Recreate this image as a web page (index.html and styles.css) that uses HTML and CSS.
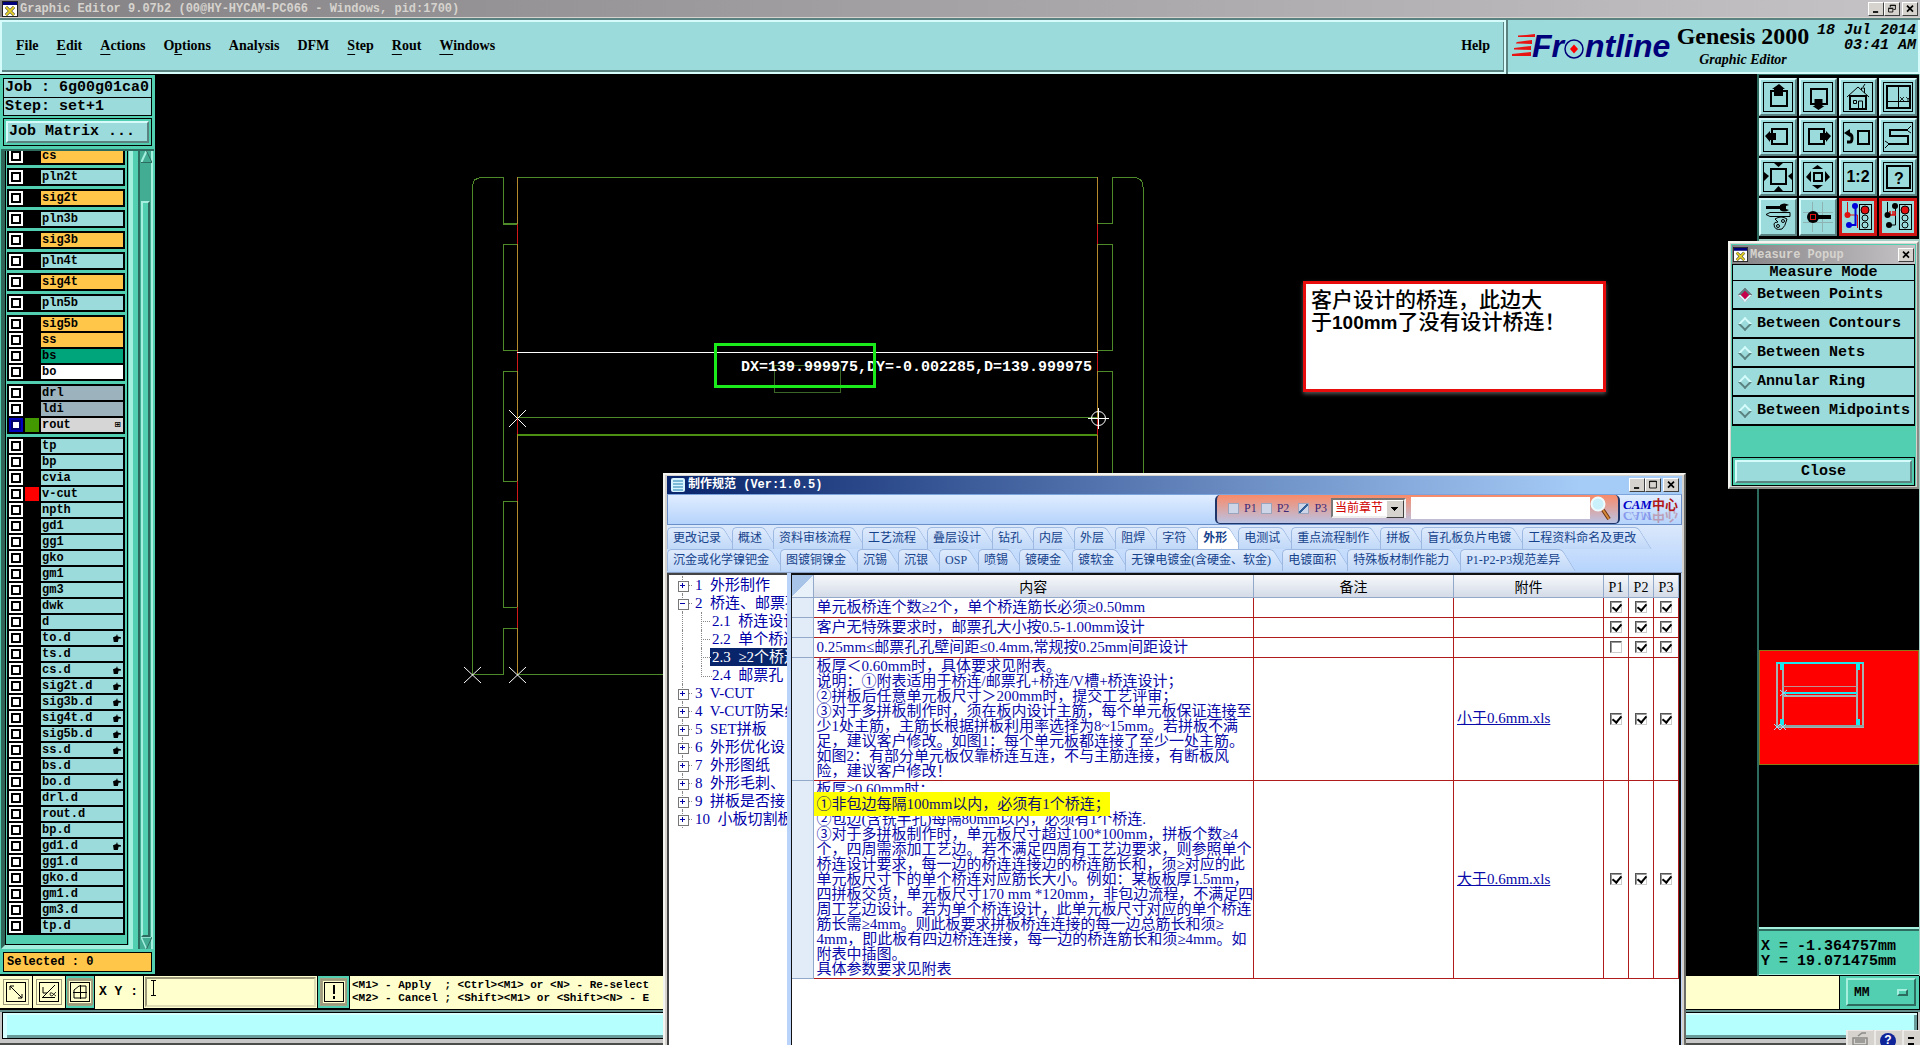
FILE: index.html
```html
<!DOCTYPE html>
<html lang="zh-CN">
<head>
<meta charset="utf-8">
<title>Graphic Editor 9.07b2</title>
<link rel="stylesheet" href="styles.css">
</head>
<body>
<header class="titlebar">
  <svg class="xicon" viewBox="0 0 16 16" width="16" height="16"><rect width="16" height="16" fill="#fff" stroke="#222" stroke-width="2"/><rect x="1" y="1" width="14" height="3" fill="#00007b"/><path d="M4 6l8 8M12 6l-8 8" stroke="#222" stroke-width="3"/><path d="M4 6l8 8M12 6l-8 8" stroke="#e6d22a" stroke-width="2"/></svg>
  <h1>Graphic Editor 9.07b2 (00@HY-HYCAM-PC066 - Windows, pid:1700)</h1>
  <div class="winbtns">
    <button aria-label="Minimize"><svg viewBox="0 0 15 14"><path d="M4 10.500h6" stroke="#000" stroke-width="2"/></svg></button>
    <button aria-label="Restore"><svg viewBox="0 0 15 14" fill="none" stroke="#000"><path d="M5.500 5V2.500h6v5H9M5 3h7M3.500 6.500h5v4h-5zM3 6h6"/></svg></button>
    <button class="close" aria-label="Close"><svg viewBox="0 0 15 14"><path d="M4 3l7 7M11 3l-7 7" stroke="#000" stroke-width="2"/></svg></button>
  </div>
</header>

<div class="topbar">
  <nav class="menu">
    <a href="#"><u>F</u>ile</a><a href="#"><u>E</u>dit</a><a href="#"><u>A</u>ctions</a><a href="#">O<u>p</u>tions</a><a href="#">Analysis</a><a href="#">DFM</a><a href="#"><u>S</u>tep</a><a href="#"><u>R</u>out</a><a href="#"><u>W</u>indows</a>
    <a href="#" class="help">Help</a>
  </nav>
  <div class="brand">
    <svg class="logo" width="162" height="34" viewBox="0 0 162 34">
      <g fill="#e81414"><path d="M6 6l17-2v3H6zM5 12l15-2v4l-15-1zM2 18l17-2v4L2 19zM0 24l19-2v4H0z"/><path d="M0 25h19M6 6h17M4 13h16M2 19h17" stroke="#e81414"/></g>
      <text x="20" y="27" class="logotext">Fr</text>
      <text x="73" y="27" class="logotext">ntline</text>
      <circle cx="62" cy="19" r="9" fill="none" stroke="#00007b" stroke-width="1.500"/>
      <path d="M62 14.500l4 4.500-4 4.500-4-4.500z" fill="#f00"/>
    </svg>
    <div class="product"><strong>Genesis 2000</strong><em>Graphic Editor</em></div>
    <time>18 Jul 2014<br>03:41 AM</time>
  </div>
</div>

<main class="work">
  <aside class="layers">
    <div class="job">Job : 6g00g01ca0</div>
    <div class="job second">Step: set+1</div>
    <div class="matrix"><button>Job Matrix ...</button></div>
    <div class="listarea">
      <div class="listbox">
        <div class="scroller">
        <ul><li class="sig"><label><input type="checkbox"><i></i><span>cs</span></label></li></ul>
        <ul><li><label><input type="checkbox"><i></i><span>pln2t</span></label></li></ul>
        <ul><li class="sig"><label><input type="checkbox"><i></i><span>sig2t</span></label></li></ul>
        <ul><li><label><input type="checkbox"><i></i><span>pln3b</span></label></li></ul>
        <ul><li class="sig"><label><input type="checkbox"><i></i><span>sig3b</span></label></li></ul>
        <ul><li><label><input type="checkbox"><i></i><span>pln4t</span></label></li></ul>
        <ul><li class="sig"><label><input type="checkbox"><i></i><span>sig4t</span></label></li></ul>
        <ul><li><label><input type="checkbox"><i></i><span>pln5b</span></label></li></ul>
        <ul>
          <li class="sig"><label><input type="checkbox"><i></i><span>sig5b</span></label></li>
          <li class="sig"><label><input type="checkbox"><i></i><span>ss</span></label></li>
          <li class="mask"><label><input type="checkbox"><i></i><span>bs</span></label></li>
          <li class="silk"><label><input type="checkbox"><i></i><span>bo</span></label></li>
        </ul>
        <ul>
          <li class="drill"><label><input type="checkbox"><i></i><span>drl</span></label></li>
          <li class="drill"><label><input type="checkbox"><i></i><span>ldi</span></label></li>
          <li class="rout"><label><input type="checkbox"><i></i><span>rout<b>⊞</b></span></label></li>
        </ul>
        <ul>
          <li><label><input type="checkbox"><i></i><span>tp</span></label></li>
          <li><label><input type="checkbox"><i></i><span>bp</span></label></li>
          <li><label><input type="checkbox"><i></i><span>cvia</span></label></li>
          <li class="vcut"><label><input type="checkbox"><i></i><span>v-cut</span></label></li>
          <li><label><input type="checkbox"><i></i><span>npth</span></label></li>
          <li><label><input type="checkbox"><i></i><span>gd1</span></label></li>
          <li><label><input type="checkbox"><i></i><span>gg1</span></label></li>
          <li><label><input type="checkbox"><i></i><span>gko</span></label></li>
          <li><label><input type="checkbox"><i></i><span>gm1</span></label></li>
          <li><label><input type="checkbox"><i></i><span>gm3</span></label></li>
          <li><label><input type="checkbox"><i></i><span>dwk</span></label></li>
          <li><label><input type="checkbox"><i></i><span>d</span></label></li>
          <li class="hand"><label><input type="checkbox"><i></i><span>to.d</span></label></li>
          <li><label><input type="checkbox"><i></i><span>ts.d</span></label></li>
          <li class="hand"><label><input type="checkbox"><i></i><span>cs.d</span></label></li>
          <li class="hand"><label><input type="checkbox"><i></i><span>sig2t.d</span></label></li>
          <li class="hand"><label><input type="checkbox"><i></i><span>sig3b.d</span></label></li>
          <li class="hand"><label><input type="checkbox"><i></i><span>sig4t.d</span></label></li>
          <li class="hand"><label><input type="checkbox"><i></i><span>sig5b.d</span></label></li>
          <li class="hand"><label><input type="checkbox"><i></i><span>ss.d</span></label></li>
          <li><label><input type="checkbox"><i></i><span>bs.d</span></label></li>
          <li class="hand"><label><input type="checkbox"><i></i><span>bo.d</span></label></li>
          <li><label><input type="checkbox"><i></i><span>drl.d</span></label></li>
          <li><label><input type="checkbox"><i></i><span>rout.d</span></label></li>
          <li><label><input type="checkbox"><i></i><span>bp.d</span></label></li>
          <li class="hand"><label><input type="checkbox"><i></i><span>gd1.d</span></label></li>
          <li><label><input type="checkbox"><i></i><span>gg1.d</span></label></li>
          <li><label><input type="checkbox"><i></i><span>gko.d</span></label></li>
          <li><label><input type="checkbox"><i></i><span>gm1.d</span></label></li>
          <li><label><input type="checkbox"><i></i><span>gm3.d</span></label></li>
          <li><label><input type="checkbox"><i></i><span>tp.d</span></label></li>
        </ul>
        </div>
      </div>
      <div class="scrollbar">
        <svg width="11" height="12" viewBox="0 0 11 12"><path d="M5.500 0L0 12h11z" fill="#43ad94"/><path d="M5.500 0L0 12" stroke="#a5efde" stroke-width="2"/><path d="M5.500 0L11 11.500H0" fill="none" stroke="#2d6b5e" stroke-width="1"/></svg>
        <div class="trough"></div>
        <div class="thumb"></div>
        <svg width="11" height="12" viewBox="0 0 11 12"><path d="M5.500 12L0 0h11z" fill="#43ad94"/><path d="M5.500 12L0 0h11" fill="none" stroke="#a5efde" stroke-width="1.500"/><path d="M5.500 12L11 0" stroke="#2d6b5e"/></svg>
      </div>
    </div>
    <div class="selected">Selected : 0</div>
  </aside>

  <section class="canvas">
    <svg class="drawing" width="100%" height="100%">
      <g transform="translate(-155 -74)" fill="none" shape-rendering="crispEdges">
        <g stroke="#4e8a2a">
          <path d="M503 177.500H482q-9.500 0-9.500 9.500V674.500H503M503.500 177v46.500H517M517 244.500H503.500v106H517M517 371.500H503.500v110H517M517 501.500H503.500v106H517M517 628.500H503.500v46M517 177.500h580M517 674.500h200"/>
          <path d="M503 224.500h14"/>
          <path d="M1112.500 177.500h21q9.500 0 9.500 9.500V500M1112.500 177v46.500H1097M1097 244.500h15.500v106H1097M1112.500 500V371.500H1097"/>
          <path d="M517 417.500h580"/>
        </g>
        <path d="M774.500 365.500h66v27h-66z" stroke="#3a6626"/>
        <path d="M517 435h580" stroke="#4b9010" stroke-width="2"/>
        <path d="M517.500 177v497M1097.500 177v323" stroke="#b58a2c"/>
        <path d="M517.500 224v20M517.500 351v20M517.500 418v16M517.500 481v20M517.500 607v21M1097.500 224v20M1097.500 351v20M1097.500 418v17" stroke="#d01818"/>
        <path d="M517 352.500h581" stroke="#fff"/>
        <g stroke="#fff" shape-rendering="auto"><path d="M509 410l17 17M526 410l-17 17M464 667l17 16M481 667l-17 16M509 667l17 16M526 667l-17 16M1088 418.500h21M1098.500 408v21"/><circle cx="1098.500" cy="418.500" r="7"/></g>
      </g>
      <g transform="translate(-155 -74)">
        <text x="741" y="371" class="measure">DX=139.999975,DY=-0.002285,D=139.999975</text>
        <rect x="715.500" y="344.500" width="159" height="42" fill="none" stroke="#1bea1b" stroke-width="3"/>
      </g>
    </svg>
  </section>

  <aside class="tools">
    <div class="toolgrid">
      <button aria-label="Pan up"><svg viewBox="0 0 38 38"><rect x="4.500" y="4.500" width="29" height="29" class="fr"/><rect x="12" y="13" width="16" height="15" class="k2"/><path d="M20 6l6 5h-2v7h-9v-7h-2z"/></svg></button>
      <button aria-label="Pan down"><svg viewBox="0 0 38 38"><rect x="4.500" y="4.500" width="29" height="29" class="fr"/><rect x="12" y="11" width="16" height="15" class="k2"/><path d="M19.500 32l6-4h-2v-7h-8v7h-2z"/></svg></button>
      <button aria-label="Home"><svg viewBox="0 0 38 38"><rect x="4.500" y="4.500" width="29" height="29" class="fr"/><path class="k1" d="M8 19L19 9l11 10M22.500 12v-2h3v5M24 9l2-3"/><path class="k2" d="M11 18v13h16V18z"/><path class="k1" d="M14.500 22.500h3v3h-3zM19.500 31v-8h4v8"/></svg></button>
      <button aria-label="Coordinates window"><svg viewBox="0 0 38 38"><rect x="4.500" y="4.500" width="29" height="29" class="fr"/><rect x="8" y="8" width="23" height="22" class="k2"/><path class="k1" d="M19.500 8v22M8 23.500h23"/><path class="k1" d="M21 19l4 4M25 19l-4 4M27 19l2 2 2-2M29 21v2" stroke-width=".8"/></svg></button>
      <button aria-label="Pan left"><svg viewBox="0 0 38 38"><rect x="4.500" y="4.500" width="29" height="29" class="fr"/><rect x="13" y="11" width="15" height="15" class="k2"/><path d="M6 18l5-5v2h6v7h-6v2z"/></svg></button>
      <button aria-label="Pan right"><svg viewBox="0 0 38 38"><rect x="4.500" y="4.500" width="29" height="29" class="fr"/><rect x="10" y="11" width="15" height="15" class="k2"/><path d="M32 18l-5-5v2h-6v7h6v2z"/></svg></button>
      <button aria-label="Previous view"><svg viewBox="0 0 38 38"><rect x="4.500" y="4.500" width="29" height="29" class="fr"/><rect x="19" y="13" width="11" height="13" class="k2"/><path d="M8 24h3q2 0 2-4t-3-4" fill="none" stroke="#000" stroke-width="3"/><path d="M5 15l6-4v8z"/></svg></button>
      <button aria-label="Serpentine view"><svg viewBox="0 0 38 38"><rect x="4.500" y="4.500" width="29" height="29" class="fr"/><path class="k2" d="M29 12H11v6h18v8H9"/><path class="k1" d="M29 11l3-3M29 13l3 2M9 25l-3-2M9 27l-3 3"/></svg></button>
      <button aria-label="Zoom out"><svg viewBox="0 0 38 38"><rect x="4.500" y="4.500" width="29" height="29" class="fr"/><rect x="12" y="11" width="15" height="15" class="k2"/><path d="M15 5h9l-4.500 4zM15 33h9l-4.500-5zM5 14v9l5-5zM34 14v9l-5-5z"/></svg></button>
      <button aria-label="Zoom in"><svg viewBox="0 0 38 38"><rect x="4.500" y="4.500" width="29" height="29" class="fr"/><rect x="15" y="15" width="8" height="8" class="k2"/><path d="M13 11h11l-5.500-4zM13 27h11l-5.500 4zM12 13v11l-5-5zM26 13v11l5-5z"/></svg></button>
      <button aria-label="Scale"><svg viewBox="0 0 38 38"><rect x="4.500" y="4.500" width="29" height="29" class="fr"/><text x="19" y="24" class="glyph">1:2</text></svg></button>
      <button aria-label="Query"><svg viewBox="0 0 38 38"><rect x="4.500" y="4.500" width="29" height="29" class="fr"/><rect x="8" y="8" width="23" height="22" class="k2"/><text x="20" y="26" class="glyph">?</text></svg></button>
      <button aria-label="Setup"><svg viewBox="0 0 38 38"><path d="M7 8h14v3H7zM21 7q4-3 9 0l-3 1v3l3 1q-5 3-9 0z"/><path class="k1" d="M7 16.500l4-2h20v4H11zM16 21q6-4 12 0-2 8-5 10-8 2-8-5 0-2 4-2z"/><circle cx="19" cy="28" r="1.500" class="k1"/><circle cx="24" cy="23" r="1.500" class="k1"/></svg></button>
      <button aria-label="Probe"><svg viewBox="0 0 38 38"><path d="M13.500 4v30M23.500 4v30M4 14.500h30M4 24.500h30" stroke="#8fb3b3"/><path d="M18 17h14v4H18z"/><circle cx="14" cy="19" r="6"/><rect x="11.500" y="16.500" width="5" height="5" fill="none" stroke="#e01010"/></svg></button>
      <button class="alert" aria-label="Measure nets"><svg viewBox="0 0 38 38"><path d="M8.500 4v13h10v13" fill="none" stroke="#e01010"/><path d="M16.500 8v19H11" fill="none" stroke="#0000d8" stroke-width="2"/><circle cx="8.500" cy="17" r="3" fill="#e01010"/><circle cx="16" cy="8" r="3" fill="#0000d8"/><circle cx="10" cy="27" r="3" fill="#0000d8"/><rect x="20.500" y="6.500" width="12" height="25" class="k1"/><circle cx="26" cy="12" r="4" fill="#e01010" stroke="#000"/><circle cx="26" cy="20" r="3" class="k1"/><circle cx="26" cy="27" r="3" class="k1"/></svg></button>
      <button class="alert" aria-label="Check nets"><svg viewBox="0 0 38 38"><path class="k1" d="M8.500 4v13M16.500 8v19H11"/><path d="M9 17h8M11 13v4M14 13v4M16 13v4" stroke="#e01010" stroke-width="1.500"/><circle cx="8.500" cy="17" r="3"/><circle cx="16" cy="8" r="3"/><circle cx="10" cy="27" r="3"/><rect x="20.500" y="6.500" width="12" height="25" class="k1"/><circle cx="26" cy="12" r="4" fill="#e01010" stroke="#000"/><circle cx="26" cy="20" r="3" class="k1"/><circle cx="26" cy="27" r="3" class="k1"/></svg></button>
    </div>
    <div class="overview">
      <svg width="160" height="115" viewBox="0 0 160 115"><rect x=".5" y=".5" width="159" height="114" fill="#f00" stroke="#8a7a18"/>
        <g fill="none" stroke-width="2"><path d="M18 12v65h86V12M24 12v65M98 12v65M24 46h74" stroke="#a8b0b0"/><path d="M17 13h88M24 43h74" stroke="#19e8f0"/><path d="M17 76h88" stroke="#88a8a8"/><path d="M24 36.500h74" stroke="#c09090" stroke-width="1"/></g>
        <path d="M21 14h4v6h-4zM97 14h4v6h-4zM21 69h4v6h-4zM97 69h4v6h-4z" fill="#19e8f0"/>
        <path d="M21 40l7 6M28 40l-7 6M15 74l6 6M21 74l-6 6M21 74l6 6M27 74l-6 6" stroke="#9df" fill="none"/></svg>
    </div>
    <div class="coords">X = -1.364757mm<br>Y = 19.071475mm</div>
  </aside>
</main>

<div class="command">
  <button class="cbtn" aria-label="Snap line"><svg viewBox="0 0 22 22"><rect x="1.500" y="1.500" width="19" height="19" class="k1"/><path class="k1" d="M5 5l12 12M5 9V5h4M17 13v4h-4"/></svg></button>
  <button class="cbtn" aria-label="Snap angle"><svg viewBox="0 0 22 22"><rect x="1.500" y="1.500" width="19" height="19" class="k1"/><path class="k1" d="M4 16.500h13M5 16L17 4M5 6v6h4"/><path class="k1" d="M18 11l-4 4q-2 0-2-2t2-1l4 3" stroke-width=".8"/></svg></button>
  <button class="cbtn on" aria-label="Snap grid"><svg viewBox="0 0 22 22"><rect x="1.500" y="1.500" width="19" height="19" class="k1"/><path class="k1" d="M5 17V9l5-4h7v12zM11.500 4v14M4 11.500h14"/></svg></button>
  <label for="xy">X Y :</label>
  <input id="xy" type="text">
  <button class="cbtn on bang" aria-label="Alert"><svg viewBox="0 0 22 22"><rect x="1.500" y="1.500" width="19" height="19" class="k1"/><path d="M11 4v9M11 15v3" stroke="#000" stroke-width="2"/></svg></button>
  <p class="hint">&lt;M1&gt; - Apply&nbsp; ; &lt;Ctrl&gt;&lt;M1&gt; or &lt;N&gt; - Re-select<br>&lt;M2&gt; - Cancel ; &lt;Shift&gt;&lt;M1&gt; or &lt;Shift&gt;&lt;N&gt; - E</p>
  <div class="unit"><button>MM<i></i></button></div>
</div>
<footer class="status">
  <div class="message"></div>
  <div class="tray">
    <svg width="28" height="15" viewBox="0 0 28 15"><path d="M1 15V0h26" fill="none" stroke="#fff"/><path d="M7 8h14v7H7zM9 10h10M9 12h10M12 6l4-3h4" fill="none" stroke="#8a8a86" stroke-width="1.500"/></svg>
    <svg width="28" height="15" viewBox="0 0 28 15"><path d="M1 15V0h26" fill="none" stroke="#fff"/><circle cx="14" cy="11" r="8" fill="#10249a"/><text x="14" y="14" class="q">?</text></svg>
    <svg width="18" height="15" viewBox="0 0 18 15"><path d="M1 15V0h16" fill="none" stroke="#fff"/><path d="M6 8h6M6 14h6" stroke="#000" stroke-width="2"/></svg>
  </div>
</footer>

<div class="note">客户设计的桥连，此边大<br>于<b>100mm</b>了没有设计桥连！</div>

<section class="popup">
  <header>
    <svg class="xicon" viewBox="0 0 16 16" width="15" height="15"><rect width="16" height="16" fill="#fff" stroke="#222" stroke-width="2"/><rect x="1" y="1" width="14" height="3" fill="#00007b"/><path d="M4 6l8 8M12 6l-8 8" stroke="#222" stroke-width="3"/><path d="M4 6l8 8M12 6l-8 8" stroke="#e6d22a" stroke-width="2"/></svg>
    <h2>Measure Popup</h2>
    <div class="winbtns"><button aria-label="Close popup"><svg viewBox="0 0 15 14"><path d="M4 3l7 7M11 3l-7 7" stroke="#000" stroke-width="2"/></svg></button></div>
  </header>
  <h3>Measure Mode</h3>
  <div class="modes">
    <label><input type="radio" name="mode" checked>Between Points</label>
    <label><input type="radio" name="mode">Between Contours</label>
    <label><input type="radio" name="mode">Between Nets</label>
    <label><input type="radio" name="mode">Annular Ring</label>
    <label><input type="radio" name="mode">Between Midpoints</label>
  </div>
  <div class="closebox"><button>Close</button></div>
</section>

<section class="dialog">
  <header>
    <svg width="14" height="14" viewBox="0 0 14 14"><rect width="14" height="14" rx="2" fill="#d8f4ff"/><path d="M2 3h10M2 6h10M2 9h10M2 12h10" stroke="#1e7fae"/></svg>
    <h2>制作规范 (Ver:1.0.5)</h2>
    <div class="winbtns">
      <button aria-label="Minimize dialog"><svg viewBox="0 0 15 14"><path d="M4 10.500h6" stroke="#000" stroke-width="2"/></svg></button>
      <button aria-label="Maximize dialog"><svg viewBox="0 0 15 14"><path d="M3.500 2.500h8v8h-8zM3 3h9" fill="none" stroke="#000"/></svg></button>
      <button class="close" aria-label="Close dialog"><svg viewBox="0 0 15 14"><path d="M4 3l7 7M11 3l-7 7" stroke="#000" stroke-width="2"/></svg></button>
    </div>
  </header>
  <div class="searchbar">
    <form class="search">
      <label><input type="checkbox">P1</label>
      <label><input type="checkbox">P2</label>
      <label><input type="checkbox" checked>P3</label>
      <span class="chapter"><select aria-label="范围"><option>当前章节</option></select></span>
      <input type="text" aria-label="搜索">
      <button type="button" aria-label="查找"><svg width="22" height="26" viewBox="0 0 22 26"><path d="M13 15l6 9" stroke="#6b3510" stroke-width="4"/><path d="M13 15l6 9" stroke="#d98a3a" stroke-width="2"/><circle cx="8" cy="9" r="6.500" fill="#c9f0fb" stroke="#eefcff" stroke-width="2"/></svg></button>
    </form>
    <div class="cam"><span><i>CAM</i>中心</span><span class="mirror" aria-hidden="true"><i>CAM</i>中心</span></div>
  </div>
  <nav class="tabs">
    <div><button>更改记录</button><button>概述</button><button>资料审核流程</button><button>工艺流程</button><button>叠层设计</button><button>钻孔</button><button>内层</button><button>外层</button><button>阻焊</button><button>字符</button><button class="active">外形</button><button>电测试</button><button>重点流程制作</button><button>拼板</button><button>盲孔板负片电镀</button><button>工程资料命名及更改</button></div>
    <div><button>沉金或化学镍钯金</button><button>图镀铜镍金</button><button>沉锡</button><button>沉银</button><button>OSP</button><button>喷锡</button><button>镀硬金</button><button>镀软金</button><button>无镍电镀金(含硬金、软金)</button><button>电镀面积</button><button>特殊板材制作能力</button><button>P1-P2-P3规范差异</button></div>
  </nav>
  <div class="content">
    <ul class="tree">
      <li>1&nbsp; 外形制作</li>
      <li class="open">2&nbsp; 桥连、邮票孔</li>
      <li class="sub">2.1&nbsp; 桥连设计</li>
      <li class="sub">2.2&nbsp; 单个桥连</li>
      <li class="sub cur"><span>2.3&nbsp; ≥2个桥连</span></li>
      <li class="sub last">2.4&nbsp; 邮票孔</li>
      <li>3&nbsp; V-CUT</li>
      <li>4&nbsp; V-CUT防呆线</li>
      <li>5&nbsp; SET拼板</li>
      <li>6&nbsp; 外形优化设</li>
      <li>7&nbsp; 外形图纸</li>
      <li>8&nbsp; 外形毛刺、</li>
      <li>9&nbsp; 拼板是否接</li>
      <li>10&nbsp; 小板切割板</li>
    </ul>
    <div class="gridwrap">
    <table>
      <colgroup><col class="c0"><col class="c1"><col class="c2"><col class="c3"><col class="c4"><col class="c4"><col class="c4"></colgroup>
      <thead><tr><th class="corner"></th><th>内容</th><th>备注</th><th>附件</th><th>P1</th><th>P2</th><th>P3</th></tr></thead>
      <tbody>
        <tr><th></th><td>单元板桥连个数≥2个，单个桥连筋长必须≥0.50mm</td><td></td><td></td><td><input type="checkbox" aria-label="P1" checked></td><td><input type="checkbox" aria-label="P2" checked></td><td><input type="checkbox" aria-label="P3" checked></td></tr>
        <tr><th></th><td>客户无特殊要求时，邮票孔大小按0.5-1.00mm设计</td><td></td><td></td><td><input type="checkbox" aria-label="P1" checked></td><td><input type="checkbox" aria-label="P2" checked></td><td><input type="checkbox" aria-label="P3" checked></td></tr>
        <tr><th></th><td>0.25mm≤邮票孔孔壁间距≤0.4mm,常规按0.25mm间距设计</td><td></td><td></td><td><input type="checkbox" aria-label="P1"></td><td><input type="checkbox" aria-label="P2" checked></td><td><input type="checkbox" aria-label="P3" checked></td></tr>
        <tr class="long"><th></th><td>板厚＜0.60mm时，具体要求见附表。<br>说明：①附表适用于桥连/邮票孔+桥连/V槽+桥连设计；<br>②拼板后任意单元板尺寸＞200mm时，提交工艺评审；<br>③对于多拼板制作时，须在板内设计主筋，每个单元板保证连接至<br>少1处主筋，主筋长根据拼板利用率选择为8~15mm。若拼板不满<br>足，建议客户修改。如图1：每个单元板都连接了至少一处主筋。<br>如图2：有部分单元板仅靠桥连互连，不与主筋连接，有断板风<br>险，建议客户修改！</td><td></td><td><a href="#">小于0.6mm.xls</a></td><td><input type="checkbox" aria-label="P1" checked></td><td><input type="checkbox" aria-label="P2" checked></td><td><input type="checkbox" aria-label="P3" checked></td></tr>
        <tr class="long"><th></th><td>板厚≥0.60mm时：<br><mark>①非包边每隔100mm以内，必须有1个桥连；</mark><br>②包边(含铣半孔)每隔80mm以内，必须有1个桥连.<br>③对于多拼板制作时，单元板尺寸超过100*100mm，拼板个数≥4<br>个，四周需添加工艺边。若不满足四周有工艺边要求，则参照单个<br>桥连设计要求，每一边的桥连连接边的桥连筋长和，须≥对应的此<br>单元板尺寸下的单个桥连对应筋长大小。例如：某板板厚1.5mm，<br>四拼板交货，单元板尺寸170 mm *120mm，非包边流程，不满足四<br>周工艺边设计。若为单个桥连设计，此单元板尺寸对应的单个桥连<br>筋长需≥4mm。则此板要求拼板桥连连接的每一边总筋长和须≥<br>4mm，即此板有四边桥连连接，每一边的桥连筋长和须≥4mm。如<br>附表中插图。<br>具体参数要求见附表</td><td></td><td><a href="#">大于0.6mm.xls</a></td><td><input type="checkbox" aria-label="P1" checked></td><td><input type="checkbox" aria-label="P2" checked></td><td><input type="checkbox" aria-label="P3" checked></td></tr>
      </tbody>
    </table>
    </div>
  </div>
</section>
</body>
</html>
```
FILE: styles.css
```css
:root {
  --teal: #52ceb0;
  --aqua: #9cdbdb;
  --dark: #2d6b5e;
  --gold: #ffc64a;
  --cream: #ffffce;
  --mono: "Liberation Mono", monospace;
  --serif: "Liberation Serif", "Noto Sans CJK SC", serif;
}
* { box-sizing: border-box; }
html { overflow: hidden; }
body { margin: 0; height: 100vh; display: flex; flex-direction: column; background: #000; font: bold 15px/18px var(--mono); color: #000; position: relative; overflow: hidden; }
button, input, select { font: inherit; color: inherit; margin: 0; padding: 0; border-radius: 0; }
button svg { display: block; }
ul { list-style: none; margin: 0; padding: 0; }
h1, h2, h3, p { margin: 0; font: inherit; }
.k1 { fill: none; stroke: #000; }
.k2 { fill: none; stroke: #000; stroke-width: 2; }

/* window title */
.titlebar { flex: none; height: 20px; display: flex; align-items: center; padding: 0 2px; gap: 2px; background: linear-gradient(90deg, #848284, #c6c3c6); border-bottom: 2px solid #5a8280; box-shadow: inset 0 -1px #d6d3ce; }
.titlebar h1, .popup h2 { flex: 1; font-size: 12px; color: #d6d3ce; white-space: nowrap; }
.winbtns { display: flex; }
.winbtns button { width: 16px; height: 14px; background: #d6d3ce; border: 1px solid; border-color: #fff #404040 #404040 #fff; }
.winbtns svg { width: 14px; height: 12px; }
.winbtns .close { margin-left: 2px; }

/* menu and brand */
.topbar { flex: none; height: 54px; display: flex; gap: 2px; background: #5a8280; }
.menu { flex: 1; display: flex; align-items: center; gap: 18px; padding: 0 14px 2px; background: var(--aqua); border: 2px solid #d6fbfb; box-shadow: inset -1px -2px #5a8280; font: bold 14px/20px var(--serif); }
.menu a { color: #000; text-decoration: none; }
.menu u { text-underline-offset: 4px; }
.menu .help { margin-left: auto; }
.brand { width: 412px; display: flex; padding: 2px 2px 0 4px; background: var(--aqua); border-bottom: 2px solid #d6fbfb; border-right: 2px solid #d6fbfb; }
.logo { flex: none; margin-top: 8px; }
.logotext { font: italic bold 32px "Liberation Sans", sans-serif; fill: #00007b; }
.product { flex: none; display: flex; flex-direction: column; align-items: center; width: 138px; }
.product strong { font: bold 24px/28px var(--serif); white-space: nowrap; }
.product em { font: italic bold 14px/20px var(--serif); }
time { flex: 1; margin-top: 1px; font-style: italic; line-height: 15px; text-align: right; white-space: nowrap; }

/* main area */
.work { flex: 1; min-height: 0; display: grid; grid-template-columns: 155px 1fr 163px; }
.layers { display: flex; flex-direction: column; min-height: 0; padding: 3px 1px 1px; background: var(--teal); border-top: 1px solid #000; margin-bottom: 2px; }
.job { flex: none; height: 20px; margin: 0 2px; padding-left: 1px; background: var(--aqua); border: 1px solid #000; white-space: nowrap; overflow: hidden; }
.job.second { height: 18px; border-top: 0; line-height: 17px; }
.matrix { flex: none; height: 28px; margin: 2px 2px 0; padding: 2px; border: 1px solid #000; }
.matrix button { width: 100%; height: 22px; padding-left: 1px; text-align: left; background: var(--aqua); border: 2px solid; border-color: #d6fbfb #5a8280 #5a8280 #d6fbfb; line-height: 16px; }
.listarea { flex: 1; min-height: 0; display: flex; gap: 5px; margin-top: 3px; border-top: 2px solid var(--dark); }
.listbox { width: 132px; padding: 0 5px 0 0; border-left: 4px solid #31655a; border-bottom: 4px solid #a5efde; box-shadow: inset -4px 0 #a5efde; }
.scroller { height: 100%; padding: 0 2px 0 1px; overflow: hidden; border: solid #000; border-width: 0 1px 1px; background: var(--teal); }
.scroller ul { padding: 1px 0; margin-bottom: 3px; background: #000; width: 118px; }
.scroller ul:first-child { margin-top: -4px; }
.scroller label { display: flex; align-items: center; height: 16px; padding: 0 2px; gap: 2px; }
.scroller input { appearance: none; width: 14px; height: 14px; border: 2px solid #fff; background: #fff; box-shadow: inset 0 0 0 2px #000; }
.scroller i { width: 14px; height: 14px; }
.scroller span { flex: 1; display: flex; justify-content: space-between; height: 14px; padding: 0 2px 0 1px; background: var(--aqua); font-size: 12px; line-height: 14px; }
.scroller .sig span { background: var(--gold); }
.scroller .mask span { background: #00a57b; }
.scroller .silk span { background: #fff; }
.scroller .drill span { background: #9cb2bd; }
.scroller .rout span { background: #d6d6d6; }
.rout b { font-size: 8px; font-family: "DejaVu Sans", sans-serif; }
.rout i { background: #429a00; }
.scroller .rout input { border-color: #0000bd; box-shadow: inset 0 0 0 2px #00006b; }
.vcut i { background: #f00; }
.hand span::after { content: ""; width: 8px; height: 8px; margin-top: 3px; background: #000; clip-path: polygon(0 40%, 40% 25%, 50% 0, 60% 30%, 100% 40%, 100% 55%, 70% 60%, 60% 100%, 10% 100%); }
.scrollbar { width: 15px; display: flex; flex-direction: column; padding: 0 2px; background: #43ad94; border-left: 2px solid var(--dark); border-right: 2px solid #a5efde; }
.scrollbar svg { flex: none; margin-left: -1px; }
.trough { height: 38px; }
.thumb { flex: 1; margin: 0 -1px; background: var(--teal); border: solid; border-width: 2px; border-color: #a5efde var(--dark) var(--dark) #a5efde; }
.selected { flex: none; height: 20px; margin: 3px 2px 1px; padding-left: 3px; background: var(--gold); border: 1px solid #000; font-size: 12px; }

.canvas { position: relative; overflow: hidden; }
.drawing { position: absolute; inset: 0; }
.measure { font: bold 15px var(--mono); fill: #fff; white-space: pre; }

/* right column */
.tools { display: flex; flex-direction: column; min-height: 0; border-left: 2px solid var(--dark); border-right: 1px solid #a5cfc4; }
.toolgrid { flex: none; display: grid; grid-template-columns: repeat(4, 38px); gap: 2px; padding: 3px 0 3px; border-bottom: 2px solid #a5cfc4; border-top: 1px solid var(--dark); }
.toolgrid button { width: 38px; height: 38px; background: var(--aqua); border: 2px solid; border-color: #d6fbfb #5a8280 #5a8280 #d6fbfb; }
.toolgrid svg { width: 38px; height: 38px; margin: -2px; }
.toolgrid .alert { border-color: #d01414; box-shadow: inset 0 0 0 1px #d01414; }
.fr { fill: none; stroke: #000; }
.glyph { font: bold 16px "Liberation Sans", sans-serif; text-anchor: middle; }
.overview { flex: 1; display: flex; flex-direction: column; justify-content: flex-end; padding-bottom: 162px; border-bottom: 2px solid #a5efde; }
.coords { flex: none; height: 46px; padding: 8px 2px; margin-bottom: 1px; background: var(--teal); border-top: 2px solid var(--dark); border-bottom: 1px solid #a5efde; line-height: 15px; white-space: nowrap; }

/* command row */
.command { flex: none; height: 34px; display: flex; padding: 0 1px 1px 0; background: #000; }
.cbtn { flex: none; width: 32px; height: 32px; margin-right: 1px; padding: 3px; background: var(--cream); border: 2px solid var(--cream); }
.cbtn svg { width: 22px; height: 22px; outline: 1px solid #9c9a7b; outline-offset: 1px; background: var(--cream); }
.cbtn.on { width: 28px; padding: 3px 1px; background: #a5a284; border-color: var(--teal); }
.cbtn.bang { width: 31px; padding: 3px; margin: 0 1px; }
.command label { width: 48px; padding-left: 4px; background: var(--cream); font: bold 13px/32px var(--mono); white-space: nowrap; }
.command input { width: 173px; height: 32px; margin-left: 1px; border: 3px solid; border-color: #9c9a7b #deddb5 #deddb5 #9c9a7b; outline: 1px solid var(--cream); outline-offset: -1px; background: linear-gradient(#000, #000) 6px 2px / 1px 15px no-repeat, linear-gradient(#000, #000) 4px 1px / 5px 1px no-repeat, linear-gradient(#000, #000) 4px 16px / 5px 1px no-repeat, var(--cream); }
.hint { flex: 1; padding: 3px 2px; background: var(--cream); font-size: 11px; line-height: 13px; white-space: nowrap; overflow: hidden; }
.unit { width: 79px; margin-left: 1px; padding: 2px 3px 2px 6px; background: var(--teal); }
.unit button { width: 100%; height: 28px; display: flex; align-items: center; justify-content: space-between; padding: 0 6px; background: var(--teal); border: 2px solid; border-color: #a5efde var(--dark) var(--dark) #a5efde; font: bold 13px var(--mono); }
.unit i { width: 11px; height: 7px; border: 2px solid; border-color: #a5efde var(--dark) var(--dark) #a5efde; }
.status { flex: none; height: 35px; display: flex; background: #c6c7c6; border-top: 2px solid #638e8c; border-bottom: 2px solid #4a4d4a; position: relative; }
.message { flex: 1; height: 27px; margin: 0 2px; background: #b5ffff; border: 1px solid #000; box-shadow: inset 4px 2px #d6ffff, inset -3px -3px #6b9a9a; }
.tray { position: absolute; right: 0; bottom: -2px; display: flex; background: #d6d3ce; }
.q { font: bold 12px "Liberation Sans", sans-serif; fill: #fff; text-anchor: middle; }

/* annotation */
.note { position: absolute; left: 1303px; top: 281px; width: 303px; height: 111px; padding: 5px 5px; background: #fff; border: 3px solid #e80c0c; box-shadow: 0 2px 4px #555; font: 500 21px/22px "Liberation Sans", "Noto Sans CJK SC", sans-serif; white-space: nowrap; }
.note b { font-size: 19px; }

/* measure popup */
.popup { position: absolute; right: 1px; top: 241px; width: 191px; height: 248px; display: flex; flex-direction: column; padding: 2px 1px 0; background: var(--teal); border: 2px solid; border-color: #f4f4f0 #8a8a86 #8a8a86 #f4f4f0; outline: 1px solid #d6d3ce; outline-offset: -3px; }
.popup header { flex: none; height: 19px; display: flex; align-items: center; gap: 2px; margin: 0 1px; padding: 0 1px; background: linear-gradient(90deg, #848284, #c6c3c6); }
.popup h3 { flex: none; height: 17px; margin: 0 1px; background: var(--aqua); border: 1px solid #000; text-align: center; line-height: 16px; }
.modes { flex: none; margin: 0 1px; }
.modes label { display: flex; align-items: center; height: 29px; padding-left: 7px; gap: 7px; background: var(--aqua); border: 1px solid #000; border-top-width: 0; border-bottom-width: 2px; white-space: nowrap; }
.modes input { appearance: none; flex: none; width: 10px; height: 10px; transform: rotate(45deg); border: 2px solid; border-color: #d6fbfb #5a8280 #5a8280 #d6fbfb; }
.modes input:checked { background: #c6004a; border-color: #5a8280 #d6fbfb #d6fbfb #5a8280; }
.closebox { flex: none; margin: auto 1px 1px; padding: 2px; border: 1px solid #000; }
.closebox button { display: block; width: 100%; height: 23px; background: var(--aqua); border: 2px solid; border-color: #d6fbfb #5a8280 #5a8280 #d6fbfb; }

/* specification dialog */
.dialog { position: absolute; left: 663px; top: 473px; bottom: 0; width: 1023px; display: flex; flex-direction: column; padding: 1px 2px 0; background: #d6d3ce; border: 2px solid; border-color: #f4f4f0 #6b6b68 #6b6b68 #f4f4f0; border-bottom: 0; font: 15px/15px var(--serif); color: #0a0aa8; }
.dialog header { flex: none; height: 18px; display: flex; align-items: center; gap: 3px; padding: 0 3px 0 4px; background: linear-gradient(90deg, #08246b, #a5cbf7 90%); }
.dialog h2 { flex: 1; color: #fff; font: bold 12px/16px "Liberation Mono", "Noto Sans CJK SC", monospace; }
.searchbar { flex: none; height: 31px; display: flex; justify-content: flex-end; background: linear-gradient(#e0edff, #b5d3fb); border: 1px solid #6a8fc8; border-top-color: #7ba3dc; }
.search { display: flex; align-items: center; width: 405px; padding: 0 4px 2px 11px; border: solid #1d3568; border-width: 0 2px 1px; border-radius: 5px; background: linear-gradient(#f98a68, #b9c3e4); font-size: 12px; color: #3c2a78; }
.search label { display: flex; align-items: center; gap: 5px; margin-right: 4px; white-space: nowrap; }
.search label:nth-child(2) { margin-right: 9px; }
.search input[type=checkbox] { appearance: none; width: 11px; height: 11px; border: 1px solid #9aa4bd; background: #ccd6e8; }
.search input:checked { background: #ccd6e8 linear-gradient(135deg, transparent 42%, #34609a 42%, #34609a 60%, transparent 60%); }
.chapter { position: relative; flex: none; width: 75px; height: 20px; margin: 0 5px 0 0; }
.chapter select { appearance: none; width: 100%; height: 100%; padding-left: 2px; background: #fff; border: 2px solid; border-color: #777 #eee #eee #777; color: #d00000; }
.chapter::after { content: ""; position: absolute; right: 2px; top: 2px; width: 16px; height: 16px; background: linear-gradient(#000, #000) 4px 6px / 7px 1px no-repeat, linear-gradient(#000, #000) 5px 7px / 5px 1px no-repeat, linear-gradient(#000, #000) 6px 8px / 3px 1px no-repeat, linear-gradient(#000, #000) 7px 9px / 1px 1px no-repeat, #d6d3ce; border: 1px solid; border-color: #fff #404040 #404040 #fff; pointer-events: none; }
.search input[type=text] { flex: 1; min-width: 0; height: 22px; border: 0; background: #fff; }
.search button { width: 24px; height: 27px; background: none; border: 0; }
.cam { width: 61px; padding-top: 1px; overflow: hidden; text-align: center; font: bold 13px/17px "Liberation Sans", "Noto Sans CJK SC", sans-serif; color: #b01818; white-space: nowrap; }
.cam i { color: #0000c8; font-family: "Liberation Serif", serif; }
.cam span { display: block; }
.cam .mirror { height: 12px; transform: scaleY(-1); opacity: .3; }
.tabs { flex: none; height: 48px; padding: 2px 0 0 6px; background: linear-gradient(#dbe8fb, #b6d4fd); border-bottom: 1px solid #8a9fc4; }
.tabs div { display: flex; gap: 17px; height: 22px; }
.tabs button { position: relative; height: 22px; background: none; border: 0; font: 12px/20px var(--serif); color: #15428b; white-space: nowrap; z-index: 0; }
.tabs button::before, .tabs button::after { content: ""; position: absolute; z-index: -1; top: 0; bottom: 0; background: linear-gradient(#dfebfc, #c0d8f8); border-top: 1px solid #9db9e2; }
.tabs button::before { left: -6px; right: 6px; border-left: 1px solid #9db9e2; border-radius: 5px 0 0 0; }
.tabs button::after { right: -9px; width: 20px; transform: skewX(32deg); border-right: 1px solid #9db9e2; border-radius: 0 4px 0 0; }
.tabs .active { font-weight: bold; }
.tabs .active::before, .tabs .active::after { background: #fff; }
.content { flex: 1; min-height: 0; display: grid; grid-template-columns: 120px 1fr; background: #b9d3fb; }
.tree { padding-top: 1px; overflow: hidden; background: #fff; border: solid #444; border-width: 2px 0 0 2px; white-space: nowrap; color: #0000a8; }
.tree li { position: relative; height: 18px; padding-left: 26px; line-height: 18px; }
.tree li::before { content: ""; position: absolute; left: 9px; top: 5px; width: 9px; height: 9px; border: 1px solid #777; background: linear-gradient(#0000a8, #0000a8) 1px 3px / 5px 1px no-repeat, linear-gradient(#0000a8, #0000a8) 3px 1px / 1px 5px no-repeat, #fff; z-index: 1; }
.tree li::after { content: ""; position: absolute; left: 13px; top: 0; width: 10px; height: 18px; border-left: 1px dotted #888; background: repeating-linear-gradient(90deg, #888 0 1px, #fff 1px 2px) 6px 9px / 5px 1px no-repeat; }
.tree .open::before { background: linear-gradient(#0000a8, #0000a8) 1px 3px / 5px 1px no-repeat, #fff; }
.tree .sub { padding-left: 43px; }
.tree .sub::before { left: 32px; top: 0; width: 10px; height: 10px; border: dotted #888; border-width: 0 0 1px 1px; background: none; }
.tree .sub:not(.last)::before { height: 18px; border-bottom: 0; background: repeating-linear-gradient(90deg, #888 0 1px, #fff 1px 2px) 1px 9px / 8px 1px no-repeat; }
.tree .sub::after { width: 0; background: none; }
.tree .cur span { display: block; margin-left: -2px; padding-left: 2px; background: #08246b; color: #fff; }
.gridwrap { margin: 0 1px 0 4px; background: #fff; border: solid #111; border-width: 2px 2px 0 1px; overflow: hidden; }
table { width: 100%; border-collapse: collapse; table-layout: fixed; }
.c0 { width: 21px; }
.c2 { width: 200px; }
.c3 { width: 150px; }
.c4 { width: 25px; }
thead th { height: 22px; padding: 4px 0 0; font: 14px/16px var(--serif); color: #000; background: linear-gradient(#f6f8fb, #d4dbe7); border-right: 1px solid #93a9c9; border-bottom: 1px solid #93a9c9; }
thead .corner { background: linear-gradient(135deg, #a8c3e8 50%, #e8f0fa 50%); }
tbody tr { height: 20px; }
tbody th { background: #e2ebf8; border-right: 1px solid #93a9c9; border-bottom: 1px solid #93a9c9; }
td { padding: 1px 0 1px 3px; border: solid #b01c1c; border-width: 0 1px 1px 0; white-space: nowrap; vertical-align: middle; }
td:nth-child(n+5) { padding: 0; text-align: center; }
td input { appearance: none; display: block; width: 12px; height: 12px; margin: 0 auto; border: 1px solid; border-color: #555 #ccc #ccc #555; box-shadow: inset 1px 1px #999; background: #fff; position: relative; }
td input:checked::after { content: ""; position: absolute; left: 3px; top: 0; width: 4px; height: 7px; border: solid #000; border-width: 0 2px 2px 0; transform: rotate(40deg); }
td a { color: #0a0aa8; }
mark { position: relative; margin-left: -3px; padding: 4px 0 4px 3px; background: #ff0; color: #101070; }
```
